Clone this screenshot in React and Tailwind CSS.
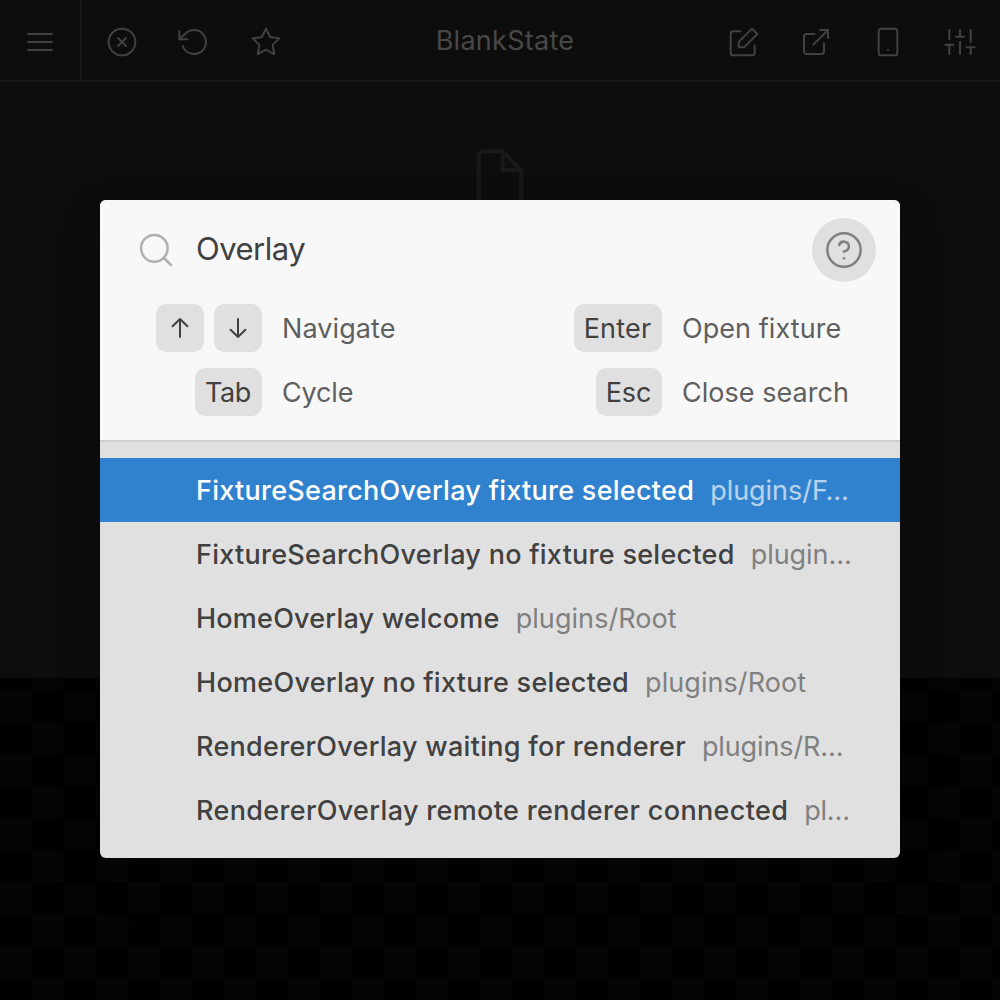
const ICONS = {
  menu: (
    <>
      <path d="M3 12h18" />
      <path d="M3 6h18" />
      <path d="M3 18h18" />
    </>
  ),
  close: (
    <>
      <circle cx="12" cy="12" r="10" />
      <path d="M15 9l-6 6M9 9l6 6" />
    </>
  ),
  reload: (
    <>
      <path d="M1 4v6h6" />
      <path d="M3.51 15a9 9 0 1 0 2.13-9.36L1 10" />
    </>
  ),
  star: (
    <path d="M12 2l3.09 6.26L22 9.27l-5 4.87 1.18 6.88L12 17.77l-6.18 3.25L7 14.14 2 9.27l6.91-1.01L12 2z" />
  ),
  edit: (
    <>
      <path d="M20 14.66V20a2 2 0 0 1-2 2H4a2 2 0 0 1-2-2V6a2 2 0 0 1 2-2h5.34" />
      <path d="M18 2l4 4-10 10H8v-4L18 2z" />
    </>
  ),
  external: (
    <>
      <path d="M18 13v6a2 2 0 0 1-2 2H5a2 2 0 0 1-2-2V8a2 2 0 0 1 2-2h6" />
      <path d="M15 3h6v6" />
      <path d="M10 14L21 3" />
    </>
  ),
  phone: (
    <>
      <rect x="5" y="2" width="14" height="20" rx="2" />
      <path d="M12 18h.01" />
    </>
  ),
  sliders: (
    <path d="M4 21v-7M4 10V3M12 21v-9M12 8V3M20 21v-5M20 12V3M1 14h6M9 8h6M17 16h6" />
  ),
  file: (
    <>
      <path d="M13 2H6a2 2 0 0 0-2 2v16a2 2 0 0 0 2 2h12a2 2 0 0 0 2-2V9z" />
      <path d="M13 2v7h7" />
    </>
  ),
  search: (
    <>
      <circle cx="11" cy="11" r="8" />
      <path d="M21 21l-4.35-4.35" />
    </>
  ),
  help: (
    <>
      <circle cx="12" cy="12" r="10" />
      <path d="M9.09 9a3 3 0 0 1 5.83 1c0 2-3 3-3 3" />
      <path d="M12 17h.01" />
    </>
  ),
};

function Icon({ name, className, strokeWidth = 1.5 }) {
  return (
    <svg
      viewBox="0 0 24 24"
      className={className}
      fill="none"
      stroke="currentColor"
      strokeWidth={strokeWidth}
      strokeLinecap="round"
      strokeLinejoin="round"
    >
      {ICONS[name]}
    </svg>
  );
}

function HeaderButton({ name }) {
  return (
    <button className="flex h-full w-[72px] items-center justify-center">
      <Icon name={name} className="size-8" />
    </button>
  );
}

function Arrow({ down }) {
  return (
    <svg
      viewBox="0 0 20 24"
      className={down ? "h-6 w-5 rotate-180" : "h-6 w-5"}
      fill="none"
      stroke="currentColor"
      strokeWidth="2"
      strokeLinecap="round"
      strokeLinejoin="round"
    >
      <path d="M10 21V3M2.6 10.2L10 3l7.4 7.2" />
    </svg>
  );
}

function Key({ children, className = "" }) {
  return (
    <span
      className={`flex h-12 items-center justify-center rounded-[10px] bg-[#e0e0e0] text-[#414141] ${className}`}
    >
      {children}
    </span>
  );
}

function Shortcut({ keys, children }) {
  return (
    <div className="flex h-12 items-center gap-5">
      <div className="flex w-[162px] justify-end gap-2.5">{keys}</div>
      <span className="whitespace-nowrap pt-0.5 text-[#5f5f5f]">{children}</span>
    </div>
  );
}

const RESULTS = [
  { name: "FixtureSearchOverlay fixture selected", path: "plugins/F…", tracking: "tracking-[0.27px]", pathTracking: "tracking-[-0.03px]", selected: true },
  { name: "FixtureSearchOverlay no fixture selected", path: "plugin…", tracking: "tracking-[0.27px]", pathTracking: "tracking-[-0.05px]" },
  { name: "HomeOverlay welcome", path: "plugins/Root", tracking: "tracking-[0.22px]", pathTracking: "tracking-[0.07px]" },
  { name: "HomeOverlay no fixture selected", path: "plugins/Root", tracking: "tracking-[0.29px]", pathTracking: "tracking-[0.07px]" },
  { name: "RendererOverlay waiting for renderer", path: "plugins/R…", tracking: "tracking-[0.28px]", pathTracking: "tracking-[-0.12px]" },
  { name: "RendererOverlay remote renderer connected", path: "pl…", tracking: "tracking-[0.34px]", pathTracking: "tracking-[-0.25px]" },
];

function Result({ name, path, tracking, pathTracking, selected }) {
  return (
    <li
      className={`flex h-16 items-center gap-4 whitespace-nowrap pl-24 pt-0.5 leading-8 ${
        selected ? "bg-[#3182ce] text-white" : "text-[#414141]"
      }`}
    >
      <span className={`font-medium ${tracking}`}>{name}</span>
      <span className={`${pathTracking} ${selected ? "text-white/65" : "text-[#808080]"}`}>{path}</span>
    </li>
  );
}

export default function App() {
  return (
    <div className="relative flex h-[1000px] w-[1000px] flex-col overflow-hidden bg-[#0d0d0d] font-['Inter',sans-serif] text-[27px] leading-8">
      <header className="flex h-[82px] shrink-0 border-b-2 border-[#171717] text-[#414141]">
        <button className="flex w-[82px] items-center justify-center border-r-2 border-[#171717] pt-1">
          <Icon name="menu" className="size-8" />
        </button>
        <div className="flex flex-1 px-1">
          <div className="flex pt-1">
            <HeaderButton name="close" />
            <HeaderButton name="reload" />
            <HeaderButton name="star" />
          </div>
          <div className="flex flex-1 items-center justify-center pt-0.5 tracking-[0.28px] text-[#484848]">
            BlankState
          </div>
          <div className="flex pt-1">
            <HeaderButton name="edit" />
            <HeaderButton name="external" />
            <HeaderButton name="phone" />
            <HeaderButton name="sliders" />
          </div>
        </div>
      </header>

      <section className="flex h-[596px] shrink-0 justify-center pt-16 text-[#191919]">
        <Icon name="file" className="size-16" />
      </section>

      <section className="flex-1 bg-[conic-gradient(#010101_25%,#050505_0_50%,#010101_0_75%,#050505_0)] bg-size-[64px_64px] bg-position-[0_12px]" />

      <div className="absolute inset-0 flex items-start justify-center pt-[200px]">
        <div className="w-[800px] overflow-hidden rounded-md bg-[#e0e0e0] shadow-[0_0_0_2px_rgba(15,15,15,0.05),0_6px_12px_rgba(15,15,15,0.1),0_18px_48px_rgba(15,15,15,0.2)]">
          <div className="flex h-[242px] flex-col border-b-2 border-[#cfcfcf] bg-[#f8f8f8]">
            <div className="flex h-[100px] items-center pl-9 pr-6">
              <Icon name="search" className="size-10 text-[#b0b0b0]" />
              <span className="ml-5 flex-1 pb-0.5 text-[31px] tracking-[-0.5px] text-[#414141]">Overlay</span>
              <span className="flex size-16 items-center justify-center rounded-full bg-[#e0e0e0] text-[#808080]">
                <Icon name="help" className="size-10" />
              </span>
            </div>
            <div className="grid grid-cols-2 gap-y-4 pt-1">
              <Shortcut
                keys={
                  <>
                    <Key className="w-12">
                      <Arrow />
                    </Key>
                    <Key className="w-12">
                      <Arrow down />
                    </Key>
                  </>
                }
              >
                <span className="tracking-[0.08px]">Navigate</span>
              </Shortcut>
              <Shortcut keys={<Key className="w-[88px] pr-px pt-0.5 tracking-[0.2px]">Enter</Key>}>
                <span className="tracking-[0.06px]">Open fixture</span>
              </Shortcut>
              <Shortcut keys={<Key className="w-[67px] pr-px pt-0.5 tracking-[-0.4px]">Tab</Key>}>
                <span className="tracking-[-0.15px]">Cycle</span>
              </Shortcut>
              <Shortcut keys={<Key className="w-[66px] pr-px pt-0.5 tracking-[-0.1px]">Esc</Key>}>
                <span className="tracking-[0.04px]">Close search</span>
              </Shortcut>
            </div>
          </div>
          <ul className="py-4">
            {RESULTS.map((result) => (
              <Result key={result.name} {...result} />
            ))}
          </ul>
        </div>
      </div>
    </div>
  );
}
